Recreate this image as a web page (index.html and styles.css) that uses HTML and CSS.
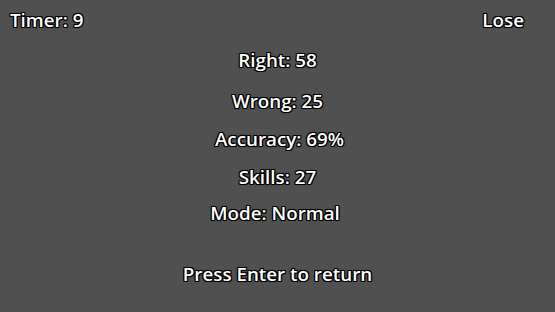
FILE: index.html
```html
<!DOCTYPE html>
<html lang="en">
<head>
    <meta charset="UTF-8">
    <title>Results</title>
    <link rel="stylesheet" href="styles.css">
</head>
<body>
    <div class="screen">
        <div class="top-bar">
            <span class="label">Timer: 9</span>
            <span class="label">Lose</span>
        </div>
        <div class="stats">
            <div class="label stat-right">Right: 58</div>
            <div class="label stat-wrong">Wrong: 25</div>
            <div class="label stat-acc">Accuracy: 69%</div>
            <div class="label stat-skills">Skills: 27</div>
            <div class="label stat-mode">Mode: Normal</div>
            <div class="label stat-return">Press Enter to return</div>
        </div>
    </div>
</body>
</html>
```

FILE: styles.css
```css
body, html {
    margin: 0;
    padding: 0;
    background-color: #505050;
    font-family: "Open Sans", sans-serif;
}

.screen {
    width: 555px;
    height: 312px;
    overflow: hidden;
}

.label {
    color: #ffffff;
    font-size: 18.8px;
    font-weight: 600;
    line-height: 26px;
    text-shadow: -1px -1px 0 #000, 1px -1px 0 #000, -1px 1px 0 #000, 1px 1px 0 #000,
                 0 -1px 0 #000, 0 1px 0 #000, -1px 0 0 #000, 1px 0 0 #000,
                 0 0 2px #000;
}

.top-bar {
    display: flex;
    justify-content: space-between;
    padding: 7px 31px 0 10px;
}

.stats {
    display: flex;
    flex-direction: column;
    align-items: center;
}

.stat-right { margin-top: 14px; }
.stat-wrong { margin-top: 15px; }
.stat-acc { margin-top: 12px; padding-left: 4px; }
.stat-skills { margin-top: 12px; }
.stat-mode { margin-top: 10px; padding-right: 5px; }
.stat-return { margin-top: 35px; }
```
